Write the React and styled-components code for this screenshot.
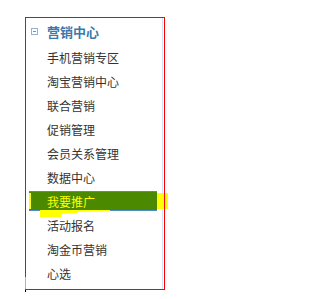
import React from "react";
import styled, {createGlobalStyle, css} from "styled-components";

const menu = [
    "手机营销专区",
    "淘宝营销中心",
    "联合营销",
    "促销管理",
    "会员关系管理",
    "数据中心",
    "我要推广",
    "活动报名",
    "淘金币营销",
    "心选",
];
const activeItem = "我要推广";

function App() {
    return (
        <Page>
            <GlobalStyle/>
            <Panel>
                <Inner>
                    <Title>
                        <Toggle/>
                        <span>营销中心</span>
                    </Title>
                    {menu.map((label) => (
                        <Item key={label} $active={label === activeItem}>
                            {label}
                        </Item>
                    ))}
                </Inner>
            </Panel>
            {/* highlighter marks somebody scribbled over the screenshot */}
            <Marks width="212" height="299" viewBox="0 0 212 299">
                <rect x="29" y="193" width="2" height="16" fill="#ffff00"/>
                <rect x="157" y="193" width="7" height="16" fill="#ffff00"/>
                <rect x="165" y="193" width="3" height="16" fill="#ffff00"/>
                <polygon points="40,210 110,210 110,211 78,212 77,213 62,214 61,217 40,217" fill="#ffff00"/>
                <rect x="25" y="277" width="1" height="12" fill="#00ffff"/>
                <rect x="25" y="290" width="1" height="2" fill="#000"/>
            </Marks>
        </Page>
    );
}

export default App;

const GlobalStyle = createGlobalStyle`
  body {
    margin: 0;
    background: #fff;
    font-family: "Noto Sans CJK SC", "Liberation Sans", sans-serif;
  }
`;

const Page = styled.div`
  position: relative;
  width: 212px;
  height: 299px;
  padding: 17px 0 0 25px;
  box-sizing: border-box;
`;

const Panel = styled.div`
  width: 140px;
  height: 273px;
  box-sizing: border-box;
  border: 1px solid #ff0000;
  display: flex;
`;

const Inner = styled.div`
  width: 137px;
  border-right: 1px solid #d4e3f3;
  box-sizing: border-box;
  display: flex;
  flex-direction: column;
`;

const Title = styled.div`
  height: 27px;
  display: flex;
  align-items: center;
  padding-left: 5px;
  gap: 9px;
  font-size: 13px;
  font-weight: bold;
  color: #3b79ad;
`;

const Toggle = styled.i`
  width: 7px;
  height: 7px;
  box-sizing: border-box;
  border: 1px solid #93b3cf;
  position: relative;

  &::after {
    content: "";
    position: absolute;
    left: 1px;
    right: 1px;
    top: 2px;
    height: 1px;
    background: #6f92b3;
  }
`;

const Item = styled.div`
  height: 24px;
  width: 128px;
  margin-left: 3px;
  padding-left: 18px;
  box-sizing: border-box;
  display: flex;
  align-items: center;
  font-size: 12px;
  color: #333;
  white-space: nowrap;

  ${(p) => p.$active && css`
    height: 20px;
    margin-top: 2px;
    margin-bottom: 2px;
    background: #4b8a00;
    border-top: 1px solid #4b8bcb;
    border-bottom: 1px solid #4b8bcb;
    color: #ffff00;
  `}
`;

const Marks = styled.svg`
  position: absolute;
  left: 0;
  top: 0;
  pointer-events: none;
`;
